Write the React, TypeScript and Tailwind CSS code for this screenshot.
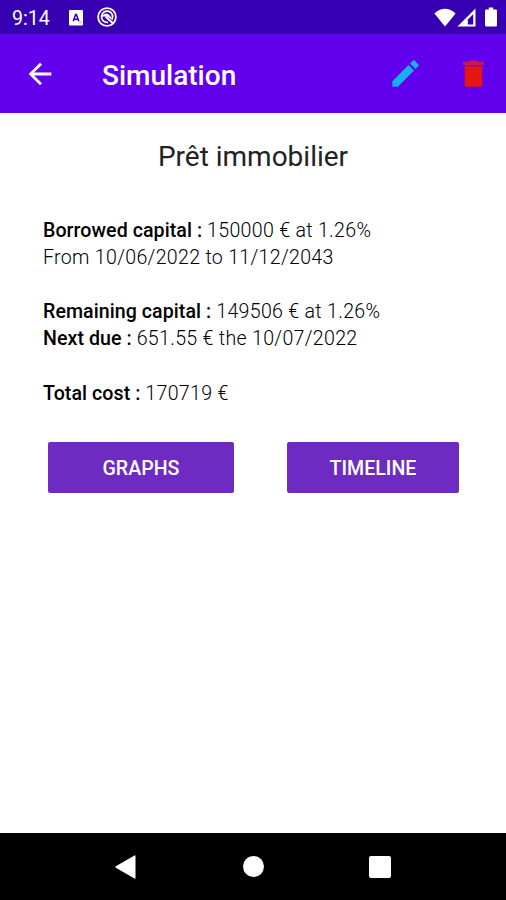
import type { ReactNode } from "react";

const iconButton = "flex h-[34px] w-[34px] items-center justify-center";

function StatusBar() {
  return (
    <div className="flex h-[34px] items-center bg-[#3700b3] pr-[9px] pl-3 text-white">
      <span className="w-[57px] pt-[3px] text-[19.6px] leading-none">9:14</span>
      <svg viewBox="0 0 14 16" className="mt-px h-4 w-[14px]">
        <rect width="14" height="15.6" rx="1" fill="#fff" />
        <path d="M4.2 11.2 6.6 4.6h.8l2.4 6.6M5.2 9.2h3.6" fill="none" stroke="#3700b3" strokeWidth="1.5" />
        <path d="M9.2 13.5h3.3v-3.3z" fill="#c3b3e8" />
      </svg>
      <svg viewBox="0 0 20 20" className="ml-[14px] h-5 w-5" fill="none" stroke="#fff">
        <circle cx="10" cy="10" r="8.9" strokeWidth="1.8" />
        <path d="M14.8 12.8A5.6 5.6 0 1 0 11 15.3" strokeWidth="1.8" />
        <path d="M5.5 9.2C7 6.5 12 5.5 14 11.5L9.5 8.8z" fill="#fff" strokeWidth="1" />
        <path d="M8.5 9.5 16.5 16.8" strokeWidth="2" />
      </svg>
      <div className="ml-auto flex items-center">
        <svg viewBox="0 0 22 19" className="h-[19px] w-[22px]" fill="#fff">
          <path d="M.4 5.4C6.6-.9 15.4-.9 21.6 5.4L11 18.6z" />
        </svg>
        <svg viewBox="0 0 19 19" className="ml-px h-[19px] w-[19px]">
          <path d="M18.5.5v18H.5z" fill="#fff" />
          <path d="M16.2 6.2v10.3h-5.4v-4.9z" fill="#3700b3" />
        </svg>
        <svg viewBox="0 0 12 20" className="ml-[9px] h-5 w-3" fill="#fff">
          <path d="M3.8.5h4.4v2h2.6q1.2 0 1.2 1.2v14.6q0 1.2-1.2 1.2H1.2Q0 19.5 0 18.3V3.7q0-1.2 1.2-1.2h2.6z" />
        </svg>
      </div>
    </div>
  );
}

function AppBar() {
  return (
    <header className="flex h-[78.5px] items-center bg-[#6200ee] pr-4 pl-[23px] text-white">
      <button type="button" aria-label="Back" className={`${iconButton} pt-px`}>
        <svg viewBox="0 0 24 24" className="h-[34px] w-[34px] shrink-0" fill="currentColor">
          <path d="M20 11H7.83l5.59-5.59L12 4l-8 8 8 8 1.41-1.41L7.83 13H20z" />
        </svg>
      </button>
      <h1 className="ml-[45px] pt-[5px] text-[28px] leading-none font-medium">Simulation</h1>
      <button type="button" aria-label="Edit" className={`${iconButton} ml-auto`}>
        <svg viewBox="0 0 24 24" className="h-[35px] w-[35px] shrink-0" fill="#16b1ee">
          <path d="M3 17.25V21h3.75L17.81 9.94l-3.75-3.75zM20.71 7.04a1 1 0 0 0 0-1.41l-2.34-2.34a1 1 0 0 0-1.41 0l-1.83 1.83 3.75 3.75z" />
        </svg>
      </button>
      <button type="button" aria-label="Delete" className={`${iconButton} ml-[34px]`}>
        <svg viewBox="0 0 24 24" className="h-[35px] w-[35px] shrink-0">
          <path d="M6 7V20a1 1 0 0 0 1 1h10a1 1 0 0 0 1-1V7z" fill="#e5160f" />
          <path d="M6 6.1h12v1.1H6z" fill="#a0107c" />
          <path d="M19.2 4h-3.7l-1-1h-5l-1 1H4.8v2.1h14.4z" fill="#c81850" />
        </svg>
      </button>
    </header>
  );
}

function Line({ label, children }: { label?: string; children: ReactNode }) {
  return (
    <p>
      {label && <span className="font-medium tracking-[0.06px] text-black">{label} </span>}
      {children}
    </p>
  );
}

function NavBar() {
  return (
    <nav className="flex h-[67px] items-center bg-black pl-[115px]">
      <svg viewBox="0 0 21 24" className="h-6 w-[21px]" fill="#fff">
        <path d="M.8 11.3 19.5.4q1-.4 1 .6v22q0 1-1 .6L.8 12.7q-1-.7 0-1.4z" />
      </svg>
      <span className="ml-[107px] h-[21px] w-[21px] rounded-full bg-white" />
      <span className="ml-[105px] h-[22px] w-[22px] rounded-xs bg-white" />
    </nav>
  );
}

export default function App() {
  return (
    <div className="flex h-[900px] w-[506px] flex-col bg-white font-[Roboto,sans-serif]">
      <StatusBar />
      <AppBar />
      <main className="flex-1">
        <h2 className="pt-[27px] text-center text-[28px] leading-[34px] font-normal text-[#222]">Prêt immobilier</h2>
        <div className="mt-[43px] pl-[43px] text-[19.6px] leading-[27.2px] font-light tracking-[0.3px] text-black">
          <Line label="Borrowed capital :">150000 € at 1.26%</Line>
          <Line>From 10/06/2022 to 11/12/2043</Line>
          <br />
          <Line label="Remaining capital :">149506 € at 1.26%</Line>
          <Line label="Next due :">651.55 € the 10/07/2022</Line>
          <br />
          <Line label="Total cost :">170719 €</Line>
        </div>
        <div className="mt-[35px] flex gap-[53px] pl-12 text-[19.6px] font-medium text-white">
          <button type="button" className="h-[51px] w-[186px] rounded-xs bg-[#6e2bc1] pt-0.5">
            GRAPHS
          </button>
          <button type="button" className="h-[51px] w-[172px] rounded-xs bg-[#6e2bc1] pt-0.5">
            TIMELINE
          </button>
        </div>
      </main>
      <NavBar />
    </div>
  );
}
